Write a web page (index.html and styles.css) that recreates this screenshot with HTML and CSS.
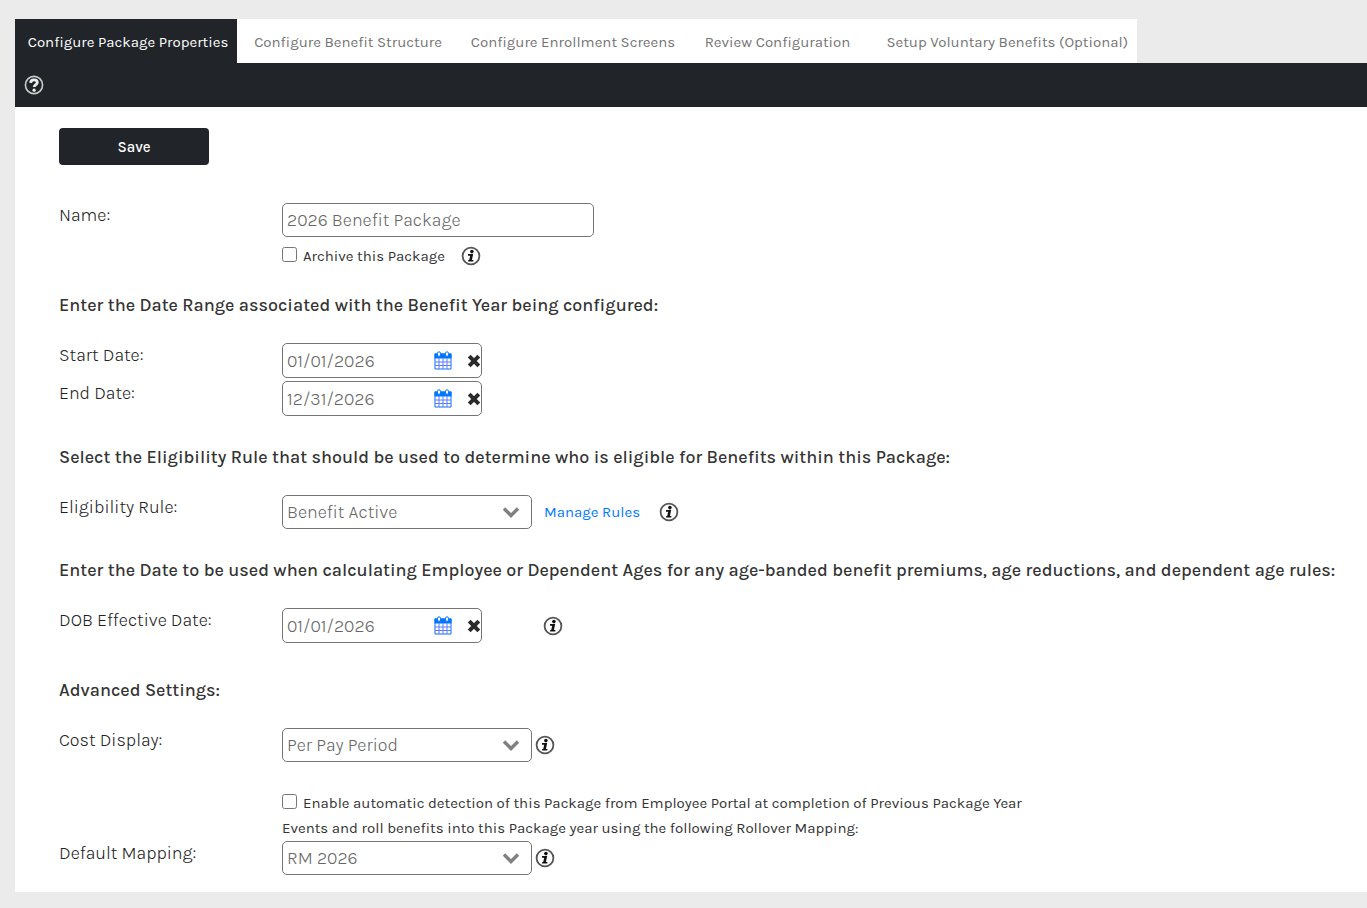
FILE: index.html
```html
<!DOCTYPE html>
<html lang="en">
<head>
  <meta charset="UTF-8">
  <meta name="viewport" content="width=device-width, initial-scale=1.0">
  <title>Configure Package Properties</title>
  <link rel="stylesheet" href="styles.css">
</head>
<body>
  <!-- shared icons -->
  <svg class="sprite" aria-hidden="true">
    <symbol id="icon-info" viewBox="0 0 20 20">
      <circle cx="10" cy="10" r="8.4" fill="#fff" stroke="#555" stroke-width="1.8"/>
      <circle cx="10.9" cy="5.6" r="1.8" fill="#111"/>
      <path d="M7 8.1h5.2l-1.3 5.8h1.6l-.3 1.6H7l.3-1.5h.9l1-4.3H7z" fill="#111"/>
    </symbol>
    <symbol id="icon-calendar" viewBox="0 0 18 20">
      <path d="M1 3h16v15H1z" fill="#fff" stroke="#0d6efd"/>
      <path d="M.5 2.5h17v5H.5z" fill="#0075ff"/>
      <path d="M5 7v11M9 7v11M13 7v11M1 11h16M1 14.5h16" stroke="#5a7dff" fill="none"/>
      <rect x="3.5" y=".8" width="3" height="4.6" rx="1.5" fill="#fff" stroke="#0075ff"/>
      <rect x="11.5" y=".8" width="3" height="4.6" rx="1.5" fill="#fff" stroke="#0075ff"/>
    </symbol>
    <symbol id="icon-clear" viewBox="0 0 14 14">
      <path d="M2.2 2.2l9.6 9.6M11.8 2.2l-9.6 9.6" stroke="#2b2b2b" stroke-width="4" fill="none"/>
    </symbol>
    <symbol id="icon-chevron" viewBox="0 0 18 12">
      <path d="M2 2.5l7 7 7-7" stroke="#808080" stroke-width="3.4" fill="none"/>
    </symbol>
  </svg>

  <nav class="tabs">
    <a class="tab active" href="#">Configure Package Properties</a>
    <a class="tab" href="#">Configure Benefit Structure</a>
    <a class="tab" href="#">Configure Enrollment Screens</a>
    <a class="tab" href="#">Review Configuration</a>
    <a class="tab last" href="#">Setup Voluntary Benefits (Optional)</a>
  </nav>

  <div class="toolbar">
    <button type="button" class="icon-btn" aria-label="Help">
      <svg class="help" viewBox="0 0 20 20">
        <circle cx="10" cy="10" r="8.6" fill="none" stroke="#ccc" stroke-width="1.6"/>
        <path d="M6.6 7.9C6.7 5.7 8 4.8 10 4.8c2 0 3.3 1 3.3 2.6 0 2.3-3.1 2.3-3.1 4.7" fill="none" stroke="#eee" stroke-width="2.8"/>
        <circle cx="10.1" cy="15.2" r="1.6" fill="#eee"/>
      </svg>
    </button>
  </div>

  <main class="panel">
    <form>
      <button type="button" class="save">Save</button>

      <div class="row">
        <label class="name" for="package-name">Name:</label>
        <div>
          <input type="text" class="field" id="package-name" value="2026 Benefit Package">
          <div class="archive">
            <label class="check"><input type="checkbox">Archive this Package</label>
            <button type="button" class="icon-btn" aria-label="Info"><svg class="info"><use href="#icon-info"/></svg></button>
          </div>
        </div>
      </div>

      <h2>Enter the Date Range associated with the Benefit Year being configured:</h2>

      <div class="row">
        <label class="name" for="start-date">Start Date:</label>
        <div class="date">
          <input type="text" id="start-date" value="01/01/2026">
          <button type="button" class="icon-btn" aria-label="Pick date"><svg class="calendar"><use href="#icon-calendar"/></svg></button>
          <button type="button" class="icon-btn" aria-label="Clear date"><svg class="clear"><use href="#icon-clear"/></svg></button>
        </div>
      </div>
      <div class="row">
        <label class="name" for="end-date">End Date:</label>
        <div class="date">
          <input type="text" id="end-date" value="12/31/2026">
          <button type="button" class="icon-btn" aria-label="Pick date"><svg class="calendar"><use href="#icon-calendar"/></svg></button>
          <button type="button" class="icon-btn" aria-label="Clear date"><svg class="clear"><use href="#icon-clear"/></svg></button>
        </div>
      </div>

      <h2>Select the Eligibility Rule that should be used to determine who is eligible for Benefits within this Package:</h2>

      <div class="row">
        <label class="name" for="rule">Eligibility Rule:</label>
        <div class="controls wide">
          <div class="select">
            <select id="rule"><option>Benefit Active</option></select>
            <svg class="chevron"><use href="#icon-chevron"/></svg>
          </div>
          <a class="manage" href="#">Manage Rules</a>
          <button type="button" class="icon-btn" aria-label="Info"><svg class="info"><use href="#icon-info"/></svg></button>
        </div>
      </div>

      <h2>Enter the Date to be used when calculating Employee or Dependent Ages for any age-banded benefit premiums, age reductions, and dependent age rules:</h2>

      <div class="row dob">
        <label class="name" for="dob-date">DOB Effective Date:</label>
        <div class="controls">
          <div class="date">
            <input type="text" id="dob-date" value="01/01/2026">
            <button type="button" class="icon-btn" aria-label="Pick date"><svg class="calendar"><use href="#icon-calendar"/></svg></button>
            <button type="button" class="icon-btn" aria-label="Clear date"><svg class="clear"><use href="#icon-clear"/></svg></button>
          </div>
          <button type="button" class="icon-btn" aria-label="Info"><svg class="info"><use href="#icon-info"/></svg></button>
        </div>
      </div>

      <h2>Advanced Settings:</h2>

      <div class="row">
        <label class="name" for="cost">Cost Display:</label>
        <div class="controls">
          <div class="select">
            <select id="cost"><option>Per Pay Period</option></select>
            <svg class="chevron"><use href="#icon-chevron"/></svg>
          </div>
          <button type="button" class="icon-btn" aria-label="Info"><svg class="info"><use href="#icon-info"/></svg></button>
        </div>
      </div>

      <div class="rollover">
        <label><input type="checkbox">Enable automatic detection of this Package from Employee Portal at completion of Previous Package Year Events and roll benefits into this Package year using the following Rollover Mapping:</label>
      </div>

      <div class="row">
        <label class="name" for="mapping">Default Mapping:</label>
        <div class="controls">
          <div class="select">
            <select id="mapping"><option>RM 2026</option></select>
            <svg class="chevron"><use href="#icon-chevron"/></svg>
          </div>
          <button type="button" class="icon-btn" aria-label="Info"><svg class="info"><use href="#icon-info"/></svg></button>
        </div>
      </div>
    </form>
  </main>
</body>
</html>
```
FILE: styles.css
```css
* {
  box-sizing: border-box;
}
body {
  margin: 0;
  padding: 19px 0 16px 15px;
  background: #ebebeb;
  color: #333;
  font-family: Karla, Inter, sans-serif;
  font-size: 18px;
  font-weight: 300;
  line-height: 24px;
}
input,
select,
button {
  font-family: inherit;
  font-weight: inherit;
}
svg {
  display: block;
}
.sprite {
  display: none;
}

/* tabs */
.tabs {
  display: grid;
  grid-template-columns: 222px 222px 228px 181px 269px;
  width: max-content;
  background: #fff;
}
.tab {
  padding: 11px 0 9px;
  color: #757575;
  font-size: 15px;
  font-weight: 400;
  text-align: center;
  text-decoration: none;
  white-space: nowrap;
}
.tab.active {
  padding-left: 4px;
  background: #212529;
  color: #fff;
}
.tab.last {
  padding-right: 9px;
  text-align: right;
}
.toolbar {
  display: flex;
  align-items: center;
  height: 44px;
  padding: 0 9px;
  background: #212529;
}
.icon-btn {
  flex: none;
  padding: 0;
  border: none;
  background: none;
  cursor: pointer;
}
.help,
.info {
  width: 20px;
  height: 20px;
}

/* form */
.panel {
  padding: 21px 12px 14px 44px;
  background: #fff;
}
form {
  display: flex;
  flex-direction: column;
}
.save {
  width: 150px;
  height: 37px;
  margin-bottom: 38px;
  border: none;
  border-radius: 4px;
  background: #212529;
  color: #fff;
  font-size: 15px;
  font-weight: 500;
  cursor: pointer;
}
h2 {
  margin: 26px 0;
  font-size: 18px;
  font-weight: 500;
  line-height: 24px;
}
.row {
  display: grid;
  grid-template-columns: 223px 1fr;
  align-items: start;
  margin-bottom: 3px;
}
.row:has(.archive) {
  margin-bottom: 0;
}
.name {
  color: #222;
}
.dob {
  min-height: 41px;
}
.field,
.date,
.select select {
  height: 34px;
  border: 1px solid #757575;
  border-radius: 5px;
  background: #fff;
  color: #666;
  font-size: 18px;
}
.field {
  display: block;
  width: 312px;
  padding: 0 4px;
}
.archive {
  display: flex;
  align-items: center;
  gap: 16px;
  height: 22px;
  margin-top: 8px;
}
.check {
  font-size: 15px;
  font-weight: 400;
}
input[type="checkbox"] {
  width: 15px;
  height: 15px;
  margin: 0 6px 0 0;
  vertical-align: -1px;
}
.date {
  display: flex;
  align-items: center;
  width: 200px;
  height: 35px;
}
.date input {
  flex: 1;
  min-width: 0;
  margin-right: 16px;
  padding: 0 4px;
  border: none;
  background: none;
  color: inherit;
  font-size: 18px;
}
.calendar {
  width: 18px;
  height: 20px;
}
.clear {
  width: 14px;
  height: 14px;
  margin-left: 15px;
}
.controls {
  display: flex;
  align-items: center;
  gap: 3px;
}
.wide {
  gap: 12px;
}
.dob .controls {
  gap: 61px;
}
.select {
  position: relative;
}
.select select {
  width: 250px;
  padding: 0 36px 0 4px;
  appearance: none;
}
.chevron {
  position: absolute;
  top: 11px;
  right: 12px;
  width: 18px;
  height: 12px;
  pointer-events: none;
}
.manage {
  margin-right: 7px;
  color: #007bff;
  font-size: 15px;
  font-weight: 400;
  text-decoration: none;
}
.rollover {
  max-width: 983px;
  margin-top: 26px;
  padding-left: 223px;
  font-size: 15px;
  font-weight: 400;
  line-height: 25px;
}
```
